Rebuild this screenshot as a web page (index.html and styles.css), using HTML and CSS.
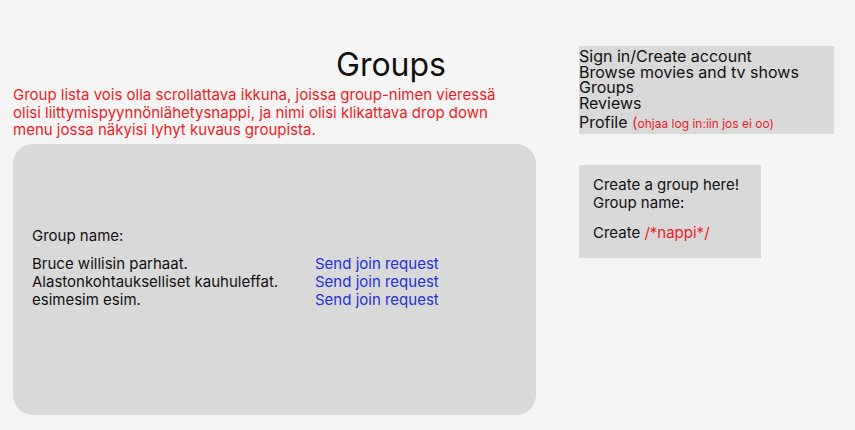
FILE: index.html
```html
<!DOCTYPE html>
<html>
<head>
<meta charset="utf-8">
<link rel="stylesheet" href="styles.css">
</head>
<body>
<div class="page">
  <main class="left">
    <h1 class="title">Groups</h1>
    <p class="note">Group lista vois olla scrollattava ikkuna, joissa group-nimen vieressä olisi liittymispyynnönlähetysnappi, ja nimi olisi klikattava drop down menu jossa näkyisi lyhyt kuvaus groupista.</p>
    <section class="list">
      <div class="list-label">Group name:</div>
      <div class="rows">
        <div class="row"><span class="name">Bruce willisin parhaat.</span><span class="join">Send join request</span></div>
        <div class="row"><span class="name">Alastonkohtaukselliset kauhuleffat.</span><span class="join">Send join request</span></div>
        <div class="row"><span class="name">esimesim esim.</span><span class="join">Send join request</span></div>
      </div>
    </section>
  </main>
  <aside class="right">
    <nav class="nav">
      <div>Sign in/Create account</div>
      <div>Browse movies and tv shows</div>
      <div>Groups</div>
      <div>Reviews</div>
      <div class="profile">Profile <span class="red small"><span class="paren">(</span>ohjaa log in:iin jos ei oo)</span></div>
    </nav>
    <div class="create">
      <div>Create a group here!</div>
      <div>Group name:</div>
      <div class="create-btn">Create <span class="red">/*nappi*/</span></div>
    </div>
  </aside>
</div>
</body>
</html>
```
FILE: styles.css
```css
html, body {
  margin: 0;
  padding: 0;
  background: #f5f5f5;
  font-family: Inter, "Noto Sans", sans-serif;
  color: #111;
}
.page {
  display: flex;
  width: 855px;
  height: 430px;
  overflow: hidden;
}
.left {
  width: 523px;
  margin-left: 13px;
  display: flex;
  flex-direction: column;
}
.title {
  margin: 45px 0 0 323px;
  font-size: 32px;
  font-weight: 400;
  line-height: 39px;
}
.note {
  margin: 2px 0 0 0;
  width: 490px;
  color: #ec1c24;
  font-size: 15px;
  line-height: 17.7px;
}
.list {
  margin-top: 5px;
  height: 271px;
  background: #d9d9d9;
  border-radius: 20px;
  padding: 83px 19px 0 19px;
  box-sizing: border-box;
  font-size: 15px;
  line-height: 18px;
}
.list-label {
  margin-bottom: 10px;
}
.row {
  display: flex;
}
.name {
  width: 283px;
}
.join {
  color: #2230d8;
}
.right {
  margin-left: 43px;
  display: flex;
  flex-direction: column;
}
.nav {
  margin-top: 46px;
  width: 255px;
  height: 88px;
  background: #d9d9d9;
  font-size: 16px;
  line-height: 15.7px;
  padding-top: 3px;
  box-sizing: border-box;
}
.profile {
  margin-top: 3px;
}
.red {
  color: #ec1c24;
}
.small {
  font-size: 12px;
}
.paren {
  font-size: 15px;
}
.create {
  margin-top: 31px;
  width: 182px;
  height: 93px;
  background: #d9d9d9;
  padding: 11px 14px;
  box-sizing: border-box;
  font-size: 15px;
  line-height: 18px;
}
.create-btn {
  margin-top: 12px;
}
```
